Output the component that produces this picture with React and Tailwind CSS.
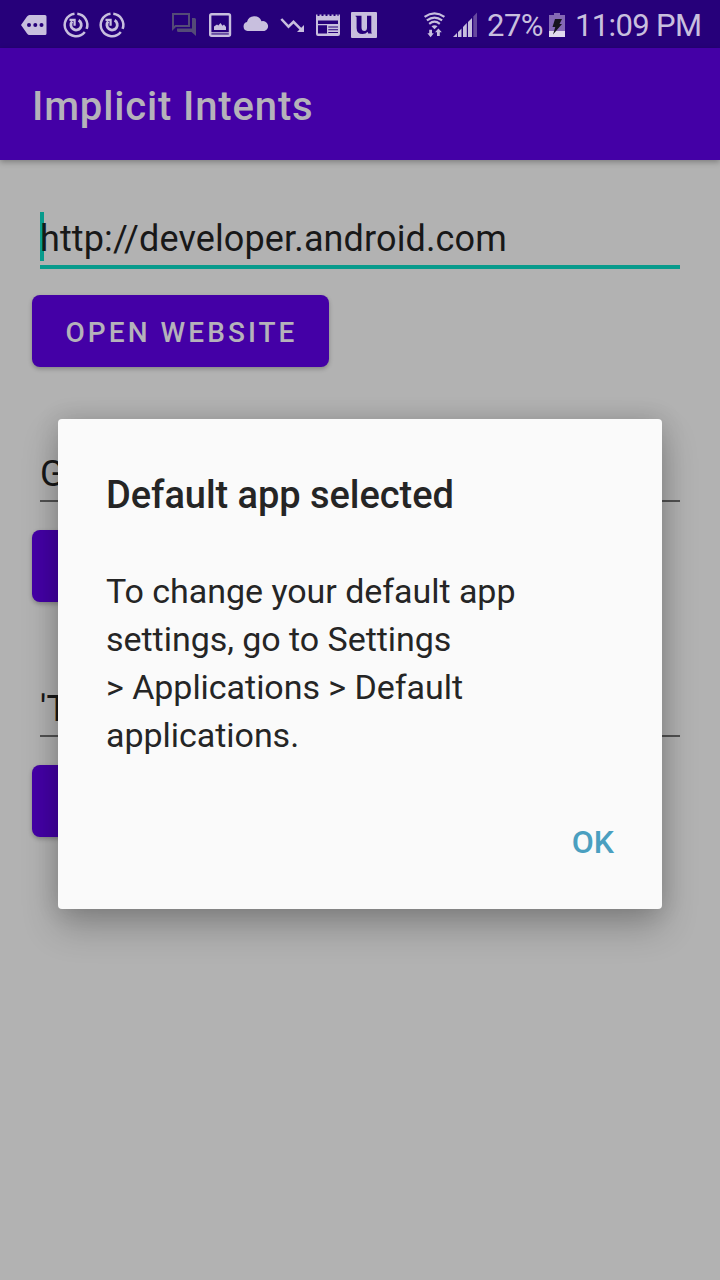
import React from "react";

const Glyph = ({ x, width, className = "", children }) => (
  <svg
    className={`h-12 shrink-0 ${className}`}
    width={width}
    height="48"
    viewBox={`${x} 0 ${width} 48`}
    fill="none"
  >
    {children}
  </svg>
);

const light = "#c8bfde";
const dark = "#26007a";

const SyncCircle = () => (
  <g stroke={light}>
    <path d="M77.3 13.7 A11.3 11.3 0 0 1 86.6 28.9" strokeWidth="2.5" />
    <path d="M84.8 32 A11.3 11.3 0 1 1 74.5 13.7" strokeWidth="2.5" />
    <path d="M78.6 20.3 A5.2 5.2 0 1 1 72.2 21.4" strokeWidth="2.8" />
    <path d="M69.5 19.9H74.6V25.8" strokeWidth="2.2" />
  </g>
);

function StatusBar() {
  return (
    <div className="flex h-12 w-full shrink-0 overflow-hidden bg-[#26007a] text-[#c8bfde]">
      <Glyph x={0} width={58}>
        <path d="M21 25L27 16.5Q28 15 29.5 15H45Q46.5 15 46.5 16.5V33.5Q46.5 35 45 35H29.5Q28 35 27 33.5Z" fill={light} />
        <circle cx="29" cy="25" r="2" fill={dark} />
        <circle cx="35.3" cy="25" r="2" fill={dark} />
        <circle cx="41.5" cy="25" r="2" fill={dark} />
      </Glyph>
      <Glyph x={58} width={36}><SyncCircle /></Glyph>
      <Glyph x={58} width={36}><SyncCircle /></Glyph>
      <Glyph x={130} width={74}>
        <path d="M173 28.5V14H189V26H175.5Z" stroke="#544b77" strokeWidth="2" />
        <path d="M192 18H194.5Q196 18 196 19.5V36L191.5 32H178.5Q177 32 177 30.5V28.5H192Z" fill="#544b77" />
      </Glyph>
      <Glyph x={204} width={34}>
        <rect x="210.2" y="14.2" width="19.8" height="21.6" rx="1.5" stroke={light} strokeWidth="2.4" />
        <path d="M214 30V26.5L217 24.5L218.3 25.5L220.5 23L222.5 25.7L224 24.5L226 27V30Z" fill={light} />
        <path d="M211 32.8H229" stroke={light} strokeWidth="1.2" />
      </Glyph>
      <Glyph x={238} width={37}>
        <path d="M247.5 31A4.6 4.6 0 0 1 247 22A7.6 7.6 0 0 1 261.5 21.3A5 5 0 0 1 264.5 31Z" fill={light} />
      </Glyph>
      <Glyph x={275} width={36}>
        <path d="M281.3 19L288.5 26.7L293.5 21.8L302.5 30.8" stroke={light} strokeWidth="2.5" />
        <path d="M304 25V32H297Z" fill={light} />
      </Glyph>
      <Glyph x={311} width={35}>
        <path d="M316 14.5H317.5V16H319.5V14.5H321.5V16H323.5V14.5H325.5V16H327.5V14.5H329.5V16H331.5V14.5H333.5V16H335.5V14.5H337.5V16H338.5V14.5H340V34Q340 36 338 36H318Q316 36 316 34Z" fill={light} />
        <path d="M318 20.5H338V24H318ZM318 25.2H327V33.5H318ZM328.3 26.4H338V27.6H328.3ZM328.3 29.2H338V30.3H328.3ZM328.3 32H338V33H328.3Z" fill={dark} />
      </Glyph>
      <Glyph x={346} width={74}>
        <rect x="351" y="12" width="26" height="26" rx="1" fill={light} />
        <path d="M355.5 15.7H361.5V27.5Q361.5 31 364.5 31Q366.8 31 367 28V15.7H371.3V31.5Q371.3 32.8 372 33.5H368.2L367.6 31.8Q366 34 362.5 34Q356.6 34 356.6 28V17.5Q356.6 16.5 355.5 16.3Z" fill={dark} />
      </Glyph>
      <Glyph x={420} width={30}>
        <g stroke={light} strokeWidth="2.2">
          <path d="M424.6 16.8Q434.5 10 444.4 16.8" />
          <path d="M426.9 20.4Q434.5 14.9 442.1 20.4" />
          <path d="M429.2 23.8Q434.5 19.6 439.8 23.8" />
        </g>
        <path d="M431.5 26.3Q434.5 24.2 437.5 26.3L434.5 29.2Z" fill={light} />
        <path d="M429.2 29.8H432V33.3H433.8L430.6 37.2L427.4 33.3H429.2ZM437 36H439.8V32.3H441.8L438.4 28.5L435 32.3H437Z" fill={light} />
      </Glyph>
      <Glyph x={450} width={37}>
        <path d="M453 37L457 33V37ZM458 32L461.5 28.5V37H458ZM463 27L466.8 23V37H463ZM468 22L472 18V37H468Z" fill={light} />
        <path d="M473.3 16.5L477 12.5V37H473.3Z" fill="#67499f" />
      </Glyph>
      <span className="w-[62px] pt-[2px] font-['Roboto',sans-serif] text-[31px] leading-[48px] tracking-[-0.5px] whitespace-nowrap">27%</span>
      <Glyph x={549} width={26}>
        <path d="M549 15H554V13H560V15H565V31H549Z" fill="#8468b5" />
        <path d="M549 31H565V37H549Z" fill="#e0d9ee" />
        <path d="M555 19H562L559.5 24H562L553 34.5L555.3 27H552.5Z" fill="#16131c" />
      </Glyph>
      <span className="pt-[2px] font-['Roboto',sans-serif] text-[31px] leading-[48px] tracking-[-0.65px] whitespace-nowrap">11:09 PM</span>
    </div>
  );
}

function Field({ value, focused }) {
  return (
    <div
      className={`mx-10 flex h-[57px] border-[#089b8c] ${focused ? "border-b-4" : ""}`}
    >
      <div className={`relative flex-1 ${focused ? "" : "mb-[2px] border-b-2 border-[#515151]"}`}>
        {focused && <span className="absolute top-0 left-0 h-[49px] w-1 bg-[#089b8c]" />}
        <span className="relative block pt-[6px] text-[36px] leading-[42px] tracking-[0.13px] whitespace-nowrap text-[#181818]">{value}</span>
      </div>
    </div>
  );
}

function ActionButton({ children }) {
  return (
    <button className="mt-[26px] ml-8 flex h-[72px] w-[297px] items-center justify-center rounded-lg bg-[#4400a6] pt-[4px] pl-[2px] text-[28px] font-medium tracking-[3.05px] whitespace-nowrap text-[#b5b2ba] shadow-[0_2px_4px_rgba(0,0,0,0.25)]">
      {children}
    </button>
  );
}

function Dialog() {
  return (
    <div className="absolute top-[419px] left-[58px] flex h-[490px] w-[604px] flex-col rounded bg-[#fafafa] px-12 text-[#252525] shadow-[0_18px_36px_rgba(0,0,0,0.24),0_0_24px_rgba(0,0,0,0.14)]">
      <h2 className="mt-[52px] text-[38px] leading-[48px] font-medium tracking-[-0.05px] whitespace-nowrap">Default app selected</h2>
      <p className="mt-[48px] text-[34px] leading-[48px] tracking-[-0.04px] whitespace-nowrap">
        To change your default app
        <br />
        settings, go to Settings
        <br />
        &gt; Applications &gt; Default
        <br />
        applications.
      </p>
      <button className="mt-[59px] self-end text-[32px] leading-[48px] font-medium text-[#4a9fc0]">OK</button>
    </div>
  );
}

export default function App() {
  return (
    <div className="relative flex h-[1280px] w-[720px] flex-col overflow-hidden bg-[#b2b2b2] font-['Roboto',sans-serif]">
      <StatusBar />
      <header className="flex h-28 shrink-0 items-center bg-[#4400a6] pt-[6px] pl-8 text-[40px] font-medium text-[#b5b2ba] shadow-[0_2px_6px_rgba(0,0,0,0.3)]">
        <h1 className="tracking-[0.85px]">Implicit Intents</h1>
      </header>
      <main className="flex flex-col pt-[52px]">
        <section className="h-[235px]">
          <Field value="http://developer.android.com" focused />
          <ActionButton>OPEN WEBSITE</ActionButton>
        </section>
        <section className="h-[235px]">
          <Field value="G" />
          <ActionButton />
        </section>
        <section>
          <Field value="'T" />
          <ActionButton />
        </section>
      </main>
      <Dialog />
    </div>
  );
}
